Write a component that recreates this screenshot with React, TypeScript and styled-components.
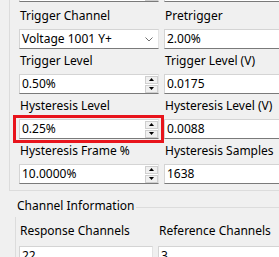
import styled, { createGlobalStyle } from 'styled-components'

const GlobalStyle = createGlobalStyle`
  html, body {
    margin: 0;
    padding: 0;
    background: #f0f0f0;
  }
  body {
    font-family: 'Noto Sans', 'DejaVu Sans', sans-serif;
    font-size: 12px;
    color: #000;
    overflow: hidden;
  }
`

const Page = styled.div`
  width: 279px;
  height: 257px;
  overflow: hidden;
`

const GroupBox = styled.fieldset<{ $left: number; $top: number }>`
  margin: ${({ $top }) => $top}px 0 0 ${({ $left }) => $left}px;
  padding: 0;
  width: 420px;
  min-width: 0;
  border: 1px solid #dcdcdc;
`

const Legend = styled.legend`
  margin-left: -1px;
  padding: 0 2px 4px;
  line-height: 15px;
`

const Fields = styled.div<{ $pad: string; $cols: string }>`
  display: grid;
  grid-template-columns: ${({ $cols }) => $cols};
  column-gap: 5px;
  row-gap: 4px;
  padding: ${({ $pad }) => $pad};
`

const Field = styled.div<{ $gap?: number; $bare?: boolean }>`
  display: flex;
  flex-direction: column;
  gap: ${({ $gap = 6 }) => $gap}px;
  margin-bottom: ${({ $bare }) => ($bare ? 2 : 0)}px;
`

const Label = styled.div`
  padding-left: 1px;
  line-height: 15px;
  white-space: nowrap;
`

const Box = styled.div`
  position: relative;
  box-sizing: border-box;
  height: 20px;
  display: flex;
  align-items: center;
  padding-left: 2px;
  background: #fff;
  border: 1px solid;
  border-color: #d4d4d4 #e3e3e3 #7a7a7a #d4d4d4;
  line-height: 18px;
  white-space: nowrap;
`

const Value = styled.span`
  flex: 1;
`

const Highlight = styled.div`
  position: relative;

  &::after {
    content: '';
    position: absolute;
    top: -4px;
    bottom: -4px;
    left: -6px;
    right: -5px;
    border: 3px solid #e8141c;
    pointer-events: none;
  }
`

const Spinner = styled.div`
  display: flex;
  flex-direction: column;
  gap: 1px;
  width: 13px;
  margin-right: 0;
`

const SpinButton = styled.div`
  box-sizing: border-box;
  height: 8px;
  display: flex;
  align-items: center;
  justify-content: center;
  background: #f0f0f0;
  border: 1px solid #cfcfcf;
`

const Chevron = styled.svg`
  width: 8px;
  height: 5px;
  margin-right: 5px;
`

const SpinArrows = () => (
  <Spinner>
    <SpinButton>
      <svg width="5" height="3" viewBox="0 0 5 3">
        <path d="M2.5 0 L5 3 L0 3 Z" fill="#000" />
      </svg>
    </SpinButton>
    <SpinButton>
      <svg width="5" height="3" viewBox="0 0 5 3">
        <path d="M0 0 L5 0 L2.5 3 Z" fill="#000" />
      </svg>
    </SpinButton>
  </Spinner>
)

type Kind = 'text' | 'spin' | 'combo'

const Control = ({ value = '', kind = 'text' }: { value?: string; kind?: Kind }) => (
  <Box>
    <Value>{value}</Value>
    {kind === 'spin' && <SpinArrows />}
    {kind === 'combo' && (
      <Chevron viewBox="0 0 8 5">
        <path d="M0.5 0.5 L4 4 L7.5 0.5" fill="none" stroke="#707070" strokeWidth="1" />
      </Chevron>
    )}
  </Box>
)

export default function App() {
  return (
    <Page>
      <GlobalStyle />
      <GroupBox $left={9} $top={-23}>
        <Fields $pad="4px 0 6px 9px" $cols="140px 1fr">
          <Field $bare>
            <Control kind="spin" />
          </Field>
          <Field $bare>
            <Control />
          </Field>

          <Field>
            <Label>Trigger Channel</Label>
            <Control kind="combo" value="Voltage 1001 Y+" />
          </Field>
          <Field>
            <Label>Pretrigger</Label>
            <Control value="2.00%" />
          </Field>

          <Field>
            <Label>Trigger Level</Label>
            <Control kind="spin" value="0.50%" />
          </Field>
          <Field>
            <Label>Trigger Level (V)</Label>
            <Control value="0.0175" />
          </Field>

          <Field>
            <Label>Hysteresis Level</Label>
            <Highlight>
              <Control kind="spin" value="0.25%" />
            </Highlight>
          </Field>
          <Field>
            <Label>Hysteresis Level (V)</Label>
            <Control value="0.0088" />
          </Field>

          <Field>
            <Label>Hysteresis Frame %</Label>
            <Control kind="spin" value="10.0000%" />
          </Field>
          <Field>
            <Label>Hysteresis Samples</Label>
            <Control value="1638" />
          </Field>
        </Fields>
      </GroupBox>

      <GroupBox $left={15} $top={7}>
        <Legend>Channel Information</Legend>
        <Fields $pad="6px 0 6px 3px" $cols="134px 1fr">
          <Field $gap={8}>
            <Label>Response Channels</Label>
            <Control value="22" />
          </Field>
          <Field $gap={8}>
            <Label>Reference Channels</Label>
            <Control value="3" />
          </Field>
        </Fields>
      </GroupBox>
    </Page>
  )
}
